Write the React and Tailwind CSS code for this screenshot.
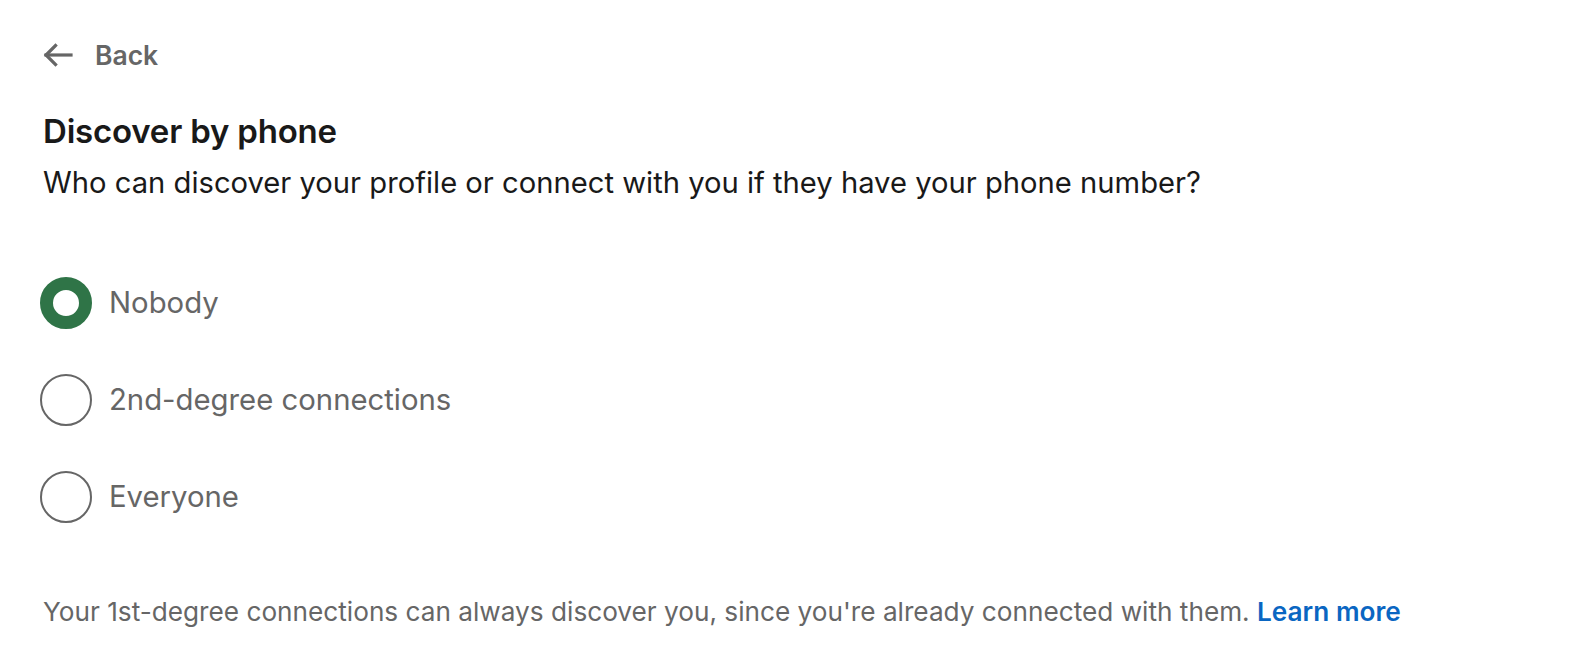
import { useState } from 'react';

const options = ['Nobody', '2nd-degree connections', 'Everyone'];

function Radio({ checked }) {
  if (checked) {
    return <span className="block w-[52px] h-[52px] rounded-full border-[13px] border-[#2f7447] bg-white shrink-0" />;
  }
  return <span className="block w-[52px] h-[52px] rounded-full border-2 border-[#666666] bg-white shrink-0" />;
}

export default function App() {
  const [value, setValue] = useState('Nobody');

  return (
    <div className="min-h-screen bg-white font-['Inter','Liberation_Sans',sans-serif] text-[#191919]">
      <div className="pl-[43px] pt-[40px]">
        <button className="flex items-center gap-[22px] h-[30px] text-[#666666]">
          <svg width="30" height="24" viewBox="0 0 30 24" fill="none" stroke="#666666" strokeWidth="3.2" strokeLinecap="square">
            <path d="M3 12h25" />
            <path d="M12.5 2.5L3 12l9.5 9.5" />
          </svg>
          <span className="text-[26.5px] leading-[30px] font-semibold">Back</span>
        </button>

        <h1 className="mt-[41px] text-[33px] font-semibold leading-[40px] tracking-[-0.2px]">Discover by phone</h1>
        <p className="mt-[14px] text-[29.2px] leading-[36px]">
          Who can discover your profile or connect with you if they have your phone number?
        </p>

        <div className="mt-[76px] -ml-[3px] flex flex-col gap-[45px]">
          {options.map((o) => (
            <label key={o} className="flex items-center gap-[17px] cursor-pointer" onClick={() => setValue(o)}>
              <Radio checked={value === o} />
              <span className="text-[29.3px] leading-[36px] text-[#666666]">{o}</span>
            </label>
          ))}
        </div>

        <p className="mt-[73px] text-[26.2px] leading-[32px] text-[#666666]">
          Your 1st-degree connections can always discover you, since you're already connected with them.{' '}
          <a href="#" className="font-semibold text-[#0a66c2]">Learn more</a>
        </p>
      </div>
    </div>
  );
}
